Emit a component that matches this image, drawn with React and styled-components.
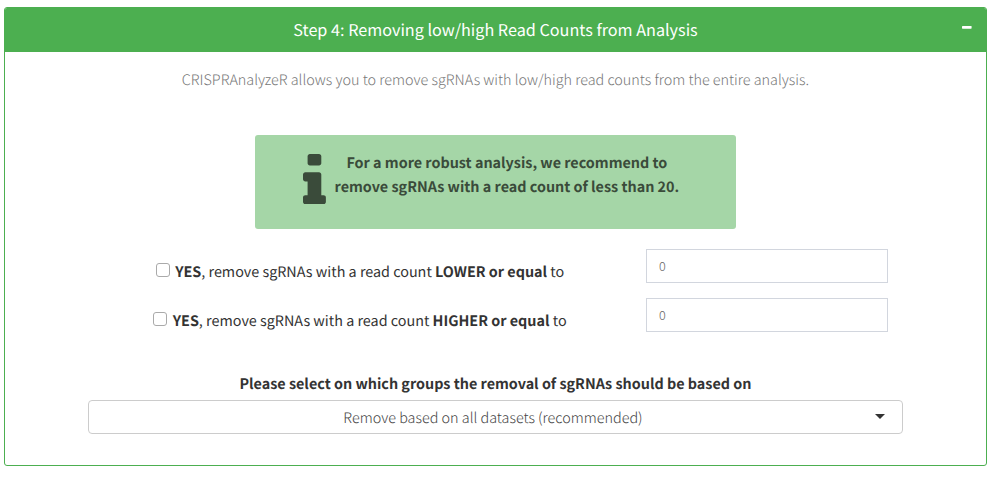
import React from "react";
import styled, { createGlobalStyle } from "styled-components";

const GlobalStyle = createGlobalStyle`
  *, *::before, *::after { box-sizing: border-box; }
  body {
    margin: 0;
    background: #fff;
    color: #333;
    font-family: "Noto Sans CJK SC", "Noto Sans", sans-serif;
    font-size: 14.36px;
    line-height: 24px;
    text-rendering: geometricPrecision;
  }
`;

const Panel = styled.section`
  width: 983px;
  height: 459px;
  margin: 7px 0 0 4px;
  border: 1px solid #4caf50;
  border-radius: 3px;
  overflow: hidden;
`;

const Header = styled.header`
  display: flex;
  align-items: center;
  height: 44px;
  padding: 0 14px 0 24px;
  background: #4caf50;
  color: #fff;
`;

const Title = styled.h3`
  flex: 1;
  margin: 0 0 2px;
  font-size: 16.19px;
  font-weight: 400;
  text-align: center;
`;

const CollapseButton = styled.button`
  display: flex;
  width: 10px;
  height: 20px;
  padding: 8px 0 0;
  border: 0;
  background: none;
  color: inherit;
  margin-bottom: 4px;
`;

const Body = styled.div`
  display: flex;
  flex-direction: column;
  align-items: center;
`;

const Intro = styled.p`
  margin: 16px 0 0;
  font-size: 14.38px;
  font-weight: 300;
  color: #777;
`;

const Callout = styled.div`
  display: flex;
  gap: 8px;
  width: 481px;
  height: 94px;
  margin-top: 43px;
  padding: 16px 0 0 48px;
  border-radius: 3px;
  background: #a5d6a7;
  color: #3a4b3a;
`;

const InfoIcon = styled.svg`
  flex: none;
  width: 22.9px;
  height: 50.3px;
  margin-top: 2.5px;
`;

const CalloutText = styled.strong`
  width: 346px;
  text-align: center;
  white-space: nowrap;
`;

const Rows = styled.div`
  display: grid;
  grid-auto-rows: 34px;
  gap: 15px;
  width: 815px;
  margin-top: 20px;
`;

const Row = styled.div`
  display: grid;
  grid-template-columns: 543px 242px;
  grid-template-rows: 34px;
  column-gap: 15px;
`;

const CheckLabel = styled.label`
  display: flex;
  justify-content: center;
  padding: 11px 0 0 1px;
  white-space: pre;
`;

const Checkbox = styled.input`
  appearance: none;
  width: 14px;
  height: 14px;
  margin: 3px 5.4px 0 0;
  border: 1px solid #aaa;
  border-radius: 3px;
  background: #fff;
`;

const NumberInput = styled.input`
  height: 34px;
  padding: 0 12px 2px;
  border: 1px solid #d2d6de;
  border-radius: 0;
  outline: 0;
  background: #fff;
  color: #666;
  font: 300 12.6px "Noto Sans CJK SC", sans-serif;
`;

const GroupLabel = styled.div`
  margin-top: 40px;
  font-weight: 700;
`;

const Select = styled.button`
  display: flex;
  align-items: center;
  width: 815px;
  height: 34px;
  margin-top: 4px;
  padding: 0 17px 0 22px;
  border: 1px solid #ccc;
  border-radius: 4px;
  background: #fff;
  color: #444;
  font: 300 14.38px/20px "Noto Sans CJK SC", sans-serif;
  text-rendering: geometricPrecision;
`;

const SelectValue = styled.span`
  flex: 1;
  padding-top: 2px;
  text-align: center;
`;

const Caret = styled.svg`
  width: 10px;
  height: 5px;
  margin-top: -2px;
  fill: #333;
`;

function CheckRow({ comparison }) {
  return (
    <Row>
      <CheckLabel>
        <Checkbox type="checkbox" />
        <span><b>YES</b>, remove sgRNAs with a read count <b>{comparison} or equal</b> to</span>
      </CheckLabel>
      <NumberInput type="text" defaultValue="0" />
    </Row>
  );
}

export default function App() {
  return (
    <>
      <GlobalStyle />
      <Panel>
        <Header>
          <Title>Step 4: Removing low/high Read Counts from Analysis</Title>
          <CollapseButton aria-label="Collapse">
            <svg width="10" height="3" viewBox="0 0 10 3">
              <rect width="9.6" height="2.7" rx="0.6" fill="currentColor" />
            </svg>
          </CollapseButton>
        </Header>
        <Body>
          <Intro>
            CRISPRAnalyzeR allows you to remove sgRNAs with low/high read counts from the entire analysis.
          </Intro>
          <Callout>
            <InfoIcon viewBox="0 128 640 1408">
              <path
                fill="currentColor"
                d="M640 1344v128q0 26-19 45t-45 19h-512q-26 0-45-19t-19-45v-128q0-26 19-45t45-19h64v-384h-64q-26 0-45-19t-19-45v-128q0-26 19-45t45-19h384q26 0 45 19t19 45v576h64q26 0 45 19t19 45zM512 192v192q0 26-19 45t-45 19h-256q-26 0-45-19t-19-45v-192q0-26 19-45t45-19h256q26 0 45 19t19 45z"
              />
            </InfoIcon>
            <CalloutText>
              For a more robust analysis, we recommend to
              <br />
              remove sgRNAs with a read count of less than 20.
            </CalloutText>
          </Callout>
          <Rows>
            <CheckRow comparison="LOWER" />
            <CheckRow comparison="HIGHER" />
          </Rows>
          <GroupLabel>Please select on which groups the removal of sgRNAs should be based on</GroupLabel>
          <Select>
            <SelectValue>Remove based on all datasets (recommended)</SelectValue>
            <Caret viewBox="0 0 10 5"><path d="M0 0h10L5 5z" /></Caret>
          </Select>
        </Body>
      </Panel>
    </>
  );
}
